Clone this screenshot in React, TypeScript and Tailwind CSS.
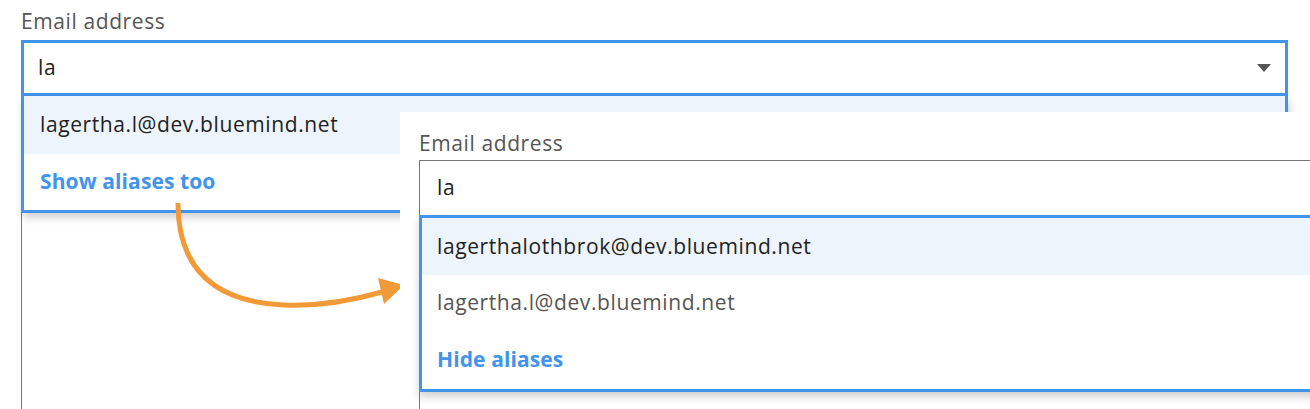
import React from 'react';

const font = { fontFamily: '"Open Sans", "Liberation Sans", sans-serif' };

function Caret() {
  return (
    <svg width="14" height="8" viewBox="0 0 14 8" className="block">
      <path d="M0 0 L14 0 L7 8 Z" fill="#555" />
    </svg>
  );
}

function Arrow() {
  return (
    <svg
      className="absolute left-0 top-0 pointer-events-none"
      width="420"
      height="330"
      viewBox="0 0 420 330"
    >
      <path
        d="M178 203 Q178 300 283 305 Q330 307 382 292"
        fill="none"
        stroke="#f29a38"
        strokeWidth="5"
      />
      <path d="M404 285 L378 278 L384 304 Z" fill="#f29a38" />
    </svg>
  );
}

export default function App() {
  return (
    <div
      className="relative w-[1310px] h-[409px] overflow-hidden bg-white text-[21px] tracking-[0.6px]"
      style={font}
    >
      {/* first screenshot: collapsed alias list */}
      <div className="pl-[21px] pr-[22px]">
        <div className="h-[40px] pt-[5px] leading-[32px] text-[#555]">Email address</div>
        <div className="h-[56px] border-[3px] border-[#4194ec] flex items-center justify-between pl-[14px] pr-[14px] text-[#222]">
          <span>la</span>
          <Caret />
        </div>
        <div className="relative border-x-[3px] border-b-[3px] border-[#4194ec] bg-white shadow-[2px_5px_8px_rgba(0,0,0,0.18)]">
          <div className="h-[58px] flex items-center px-[16px] bg-[#edf4fc] text-[#222]">
            lagertha.l@dev.bluemind.net
          </div>
          <div className="h-[56px] flex items-center px-[16px] font-bold tracking-[0.1px] text-[#4194ec]">
            Show aliases too
          </div>
        </div>
        <div className="h-[220px] border-l border-[#777]" />
      </div>

      <Arrow />

      {/* second screenshot: aliases shown */}
      <div className="absolute left-[400px] top-[112px] w-[1000px] h-[320px] bg-white pl-[19px]">
        <div className="h-[48px] pt-[15px] leading-[32px] text-[#555]">Email address</div>
        <div className="h-[55px] border-l border-t border-[#777] flex items-center pl-[17px] text-[#222]">
          la
        </div>
        <div className="border-l-[3px] border-y-[3px] border-[#4194ec] bg-white shadow-[0_5px_8px_rgba(0,0,0,0.18)]">
          <div className="h-[57px] flex items-center px-[15px] bg-[#edf4fc] text-[#222]">
            lagerthalothbrok@dev.bluemind.net
          </div>
          <div className="h-[56px] flex items-center px-[15px] text-[#555]">
            lagertha.l@dev.bluemind.net
          </div>
          <div className="h-[58px] flex items-center px-[15px] font-bold tracking-[0.1px] text-[#4194ec]">
            Hide aliases
          </div>
        </div>
        <div className="h-[40px] border-l border-[#777]" />
      </div>
    </div>
  );
}
